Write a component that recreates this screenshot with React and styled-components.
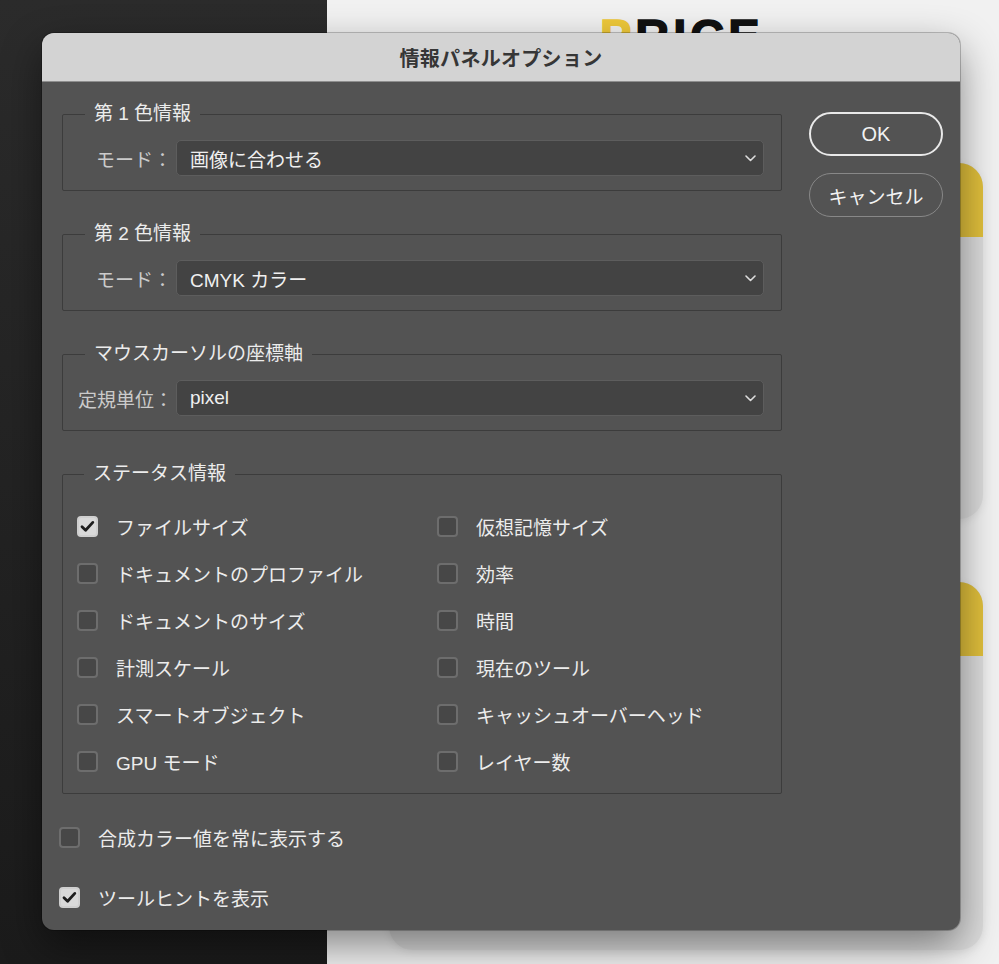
import React from 'react';
import styled, { createGlobalStyle } from 'styled-components';

const GlobalStyle = createGlobalStyle`
  html, body { margin: 0; padding: 0; }
  body {
    width: 999px;
    height: 964px;
    overflow: hidden;
    background: #f0f0f0;
    font-family: "Liberation Sans", "Noto Sans CJK JP", sans-serif;
  }
  * { box-sizing: border-box; }
`;

const Page = styled.div`
  display: flex;
  height: 964px;
`;

const Sidebar = styled.aside`
  width: 327px;
  flex: none;
  background: linear-gradient(180deg, #2b2b2b 0%, #1b1b1b 100%);
`;

const Main = styled.main`
  flex: 1;
  display: flex;
  flex-direction: column;
  padding: 12px 16px 0 62px;
  background: #f1f1f1;
`;

const Logo = styled.div`
  margin-left: 211px;
  font-family: "Liberation Sans", sans-serif;
  font-weight: 700;
  font-size: 47px;
  line-height: 48px;
  letter-spacing: 4px;
  color: #111;
  -webkit-text-stroke: 1.5px currentColor;
  span { color: #efc93a; }
`;

const PlanCard = styled.div`
  width: 594px;
  height: ${(p) => p.$h}px;
  margin-top: ${(p) => p.$mt}px;
  flex: none;
  border-radius: 24px;
  background: #dcdcdc;
  overflow: hidden;
  box-shadow: 0 2px 10px rgba(0, 0, 0, 0.08);
`;

const PlanHeader = styled.div`
  height: 74px;
  background: #e1c03c;
`;

const Dialog = styled.div`
  position: absolute;
  top: 33px;
  left: 42px;
  width: 918px;
  height: 897px;
  border-radius: 12px;
  overflow: hidden;
  background: #535353;
  box-shadow: 0 16px 40px rgba(0, 0, 0, 0.45), 0 0 0 1px rgba(0, 0, 0, 0.22);
  color: #ececec;
  font-size: 19px;
  display: flex;
  flex-direction: column;
`;

const TitleBar = styled.div`
  height: 49px;
  flex: none;
  display: flex;
  align-items: center;
  justify-content: center;
  background: #d3d3d3;
  border-bottom: 1px solid #8e8e8e;
  color: #363636;
  font-size: 20px;
  font-weight: 700;
  letter-spacing: 0.3px;
`;

const Body = styled.div`
  flex: 1;
  display: flex;
  gap: 27px;
  padding: 21px 17px 0 20px;
`;

const FormColumn = styled.div`
  width: 720px;
  display: flex;
  flex-direction: column;
`;

const Group = styled.fieldset`
  margin: 0 0 32px;
  padding: ${(p) => p.$pad || '15px 17px 14px 15px'};
  border: 1px solid #3c3c3c;
  border-radius: 2px;
  min-width: 0;
  &:last-of-type { margin-bottom: 0; }
`;

const GroupTitle = styled.legend`
  margin-left: 7px;
  padding: 0 9px;
  font-size: 19px;
  line-height: 22px;
  color: #ececec;
`;

const SelectRow = styled.div`
  display: flex;
  align-items: center;
`;

const FieldLabel = styled.span`
  width: 94px;
  margin-right: 4px;
  flex: none;
  text-align: right;
  white-space: nowrap;
  color: #cbcbcb;
`;

const SelectBox = styled.div`
  flex: 1;
  height: 36px;
  display: flex;
  align-items: center;
  justify-content: space-between;
  padding: 0 7px 0 13px;
  background: #434343;
  border: 1px solid #5d5d5d;
  border-radius: 5px;
  color: #f0f0f0;
`;

const CheckGrid = styled.div`
  display: grid;
  grid-template-columns: 360px 360px;
  grid-auto-rows: 47px;
`;

const CheckRow = styled.label`
  display: flex;
  align-items: center;
  gap: 18px;
  white-space: nowrap;
  color: #ececec;
`;

const Box = styled.span`
  width: 21px;
  height: 21px;
  flex: none;
  display: flex;
  align-items: center;
  justify-content: center;
  border-radius: 4px;
  background: ${(p) => (p.$checked ? '#d9d9d9' : '#474747')};
  border: 2px solid ${(p) => (p.$checked ? '#cfcfcf' : '#6d6d6d')};
`;

const Options = styled.div`
  margin: 20px 0 0 -3px;
  display: grid;
  grid-auto-rows: 47px;
  row-gap: 13px;
`;

const ButtonColumn = styled.div`
  width: 134px;
  flex: none;
  display: flex;
  flex-direction: column;
  gap: 17px;
  padding-top: 9px;
`;

const PillButton = styled.button`
  width: 134px;
  height: 44px;
  border-radius: 22px;
  background: transparent;
  border: ${(p) => (p.$primary ? '2px solid #e9e9e9' : '1.5px solid #888888')};
  color: #f2f2f2;
  font-family: inherit;
  font-size: ${(p) => (p.$primary ? '20px' : '19px')};
  padding: 0;
  cursor: pointer;
`;

const Chevron = () => (
  <svg width="11" height="7" viewBox="0 0 11 7">
    <polyline points="1,1 5.5,5.5 10,1" fill="none" stroke="#dcdcdc" strokeWidth="1.6" strokeLinecap="round" strokeLinejoin="round" />
  </svg>
);

const CheckMark = () => (
  <svg width="15" height="13" viewBox="0 0 15 13">
    <polyline points="2,6.8 5.6,10.3 12.8,2.4" fill="none" stroke="#1d1d1d" strokeWidth="2.8" strokeLinecap="round" strokeLinejoin="round" />
  </svg>
);

const Check = ({ checked, children }) => (
  <CheckRow>
    <Box $checked={checked}>{checked && <CheckMark />}</Box>
    <span>{children}</span>
  </CheckRow>
);

const Select = ({ label, value }) => (
  <SelectRow>
    <FieldLabel>{label}</FieldLabel>
    <SelectBox>
      <span>{value}</span>
      <Chevron />
    </SelectBox>
  </SelectRow>
);

const statusItems = [
  ['ファイルサイズ', true],
  ['仮想記憶サイズ', false],
  ['ドキュメントのプロファイル', false],
  ['効率', false],
  ['ドキュメントのサイズ', false],
  ['時間', false],
  ['計測スケール', false],
  ['現在のツール', false],
  ['スマートオブジェクト', false],
  ['キャッシュオーバーヘッド', false],
  ['GPU モード', false],
  ['レイヤー数', false],
];

export default function App() {
  return (
    <>
      <GlobalStyle />
      <Page>
        <Sidebar />
        <Main>
          <Logo><span>P</span>RICE</Logo>
          <PlanCard $mt={103} $h={356}><PlanHeader /></PlanCard>
          <PlanCard $mt={63} $h={368}><PlanHeader /></PlanCard>
        </Main>
      </Page>
      <Dialog>
        <TitleBar>情報パネルオプション</TitleBar>
        <Body>
          <FormColumn>
            <Group>
              <GroupTitle>第 1 色情報</GroupTitle>
              <Select label="モード：" value="画像に合わせる" />
            </Group>
            <Group>
              <GroupTitle>第 2 色情報</GroupTitle>
              <Select label="モード：" value="CMYK カラー" />
            </Group>
            <Group>
              <GroupTitle>マウスカーソルの座標軸</GroupTitle>
              <Select label="定規単位：" value="pixel" />
            </Group>
            <Group $pad="18px 0 8px 14px">
              <GroupTitle>ステータス情報</GroupTitle>
              <CheckGrid>
                {statusItems.map(([text, on]) => (
                  <Check key={text} checked={on}>{text}</Check>
                ))}
              </CheckGrid>
            </Group>
            <Options>
              <Check checked={false}>合成カラー値を常に表示する</Check>
              <Check checked>ツールヒントを表示</Check>
            </Options>
          </FormColumn>
          <ButtonColumn>
            <PillButton $primary>OK</PillButton>
            <PillButton>キャンセル</PillButton>
          </ButtonColumn>
        </Body>
      </Dialog>
    </>
  );
}
